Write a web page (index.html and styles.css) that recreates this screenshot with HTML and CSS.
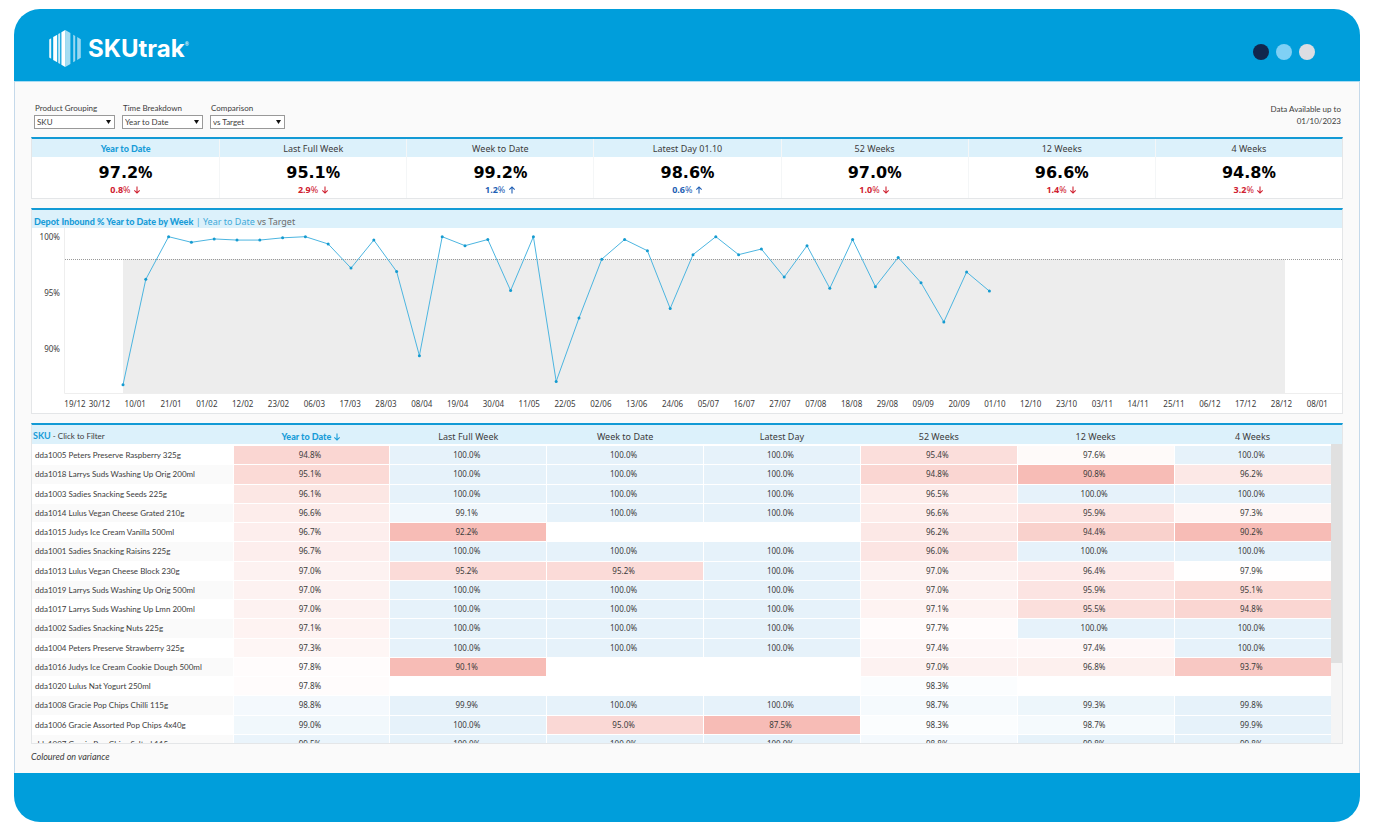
FILE: index.html
```html
<!DOCTYPE html>
<html lang="en">

<head>
    <meta charset="UTF-8">
    <meta name="viewport" content="width=device-width, initial-scale=1">
    <title>SKUtrak</title>
    <link rel="stylesheet" href="styles.css">
</head>

<body>
    <div class="window">
        <header class="top-bar">
            <div class="logo">
                <svg class="logo-mark" viewBox="0 0 32 37" aria-hidden="true">
                    <g fill="#fff">
                        <path d="M0.2 9.4L2.2 8.2V28.8L0.2 27.6Z" opacity=".9" />
                        <path d="M4.2 7L8.2 4.7V32.3L4.2 30Z" />
                        <path d="M9.2 4.1L11.2 2.9V34.1L9.2 32.9Z" opacity=".8" />
                        <path d="M12.4 2.2L16.2 0V37L12.4 34.8Z" />
                        <path d="M16.2 0L21.4 3.1V33.9L16.2 37Z" opacity=".65" />
                        <path d="M24.2 4.8L26.2 5.9V31.1L24.2 32.2Z" opacity=".6" />
                        <path d="M28.2 7.1L31.8 9.2V27.8L28.2 29.9Z" opacity=".6" />
                    </g>
                </svg>
                <span class="logo-text">SKUtrak</span><span class="logo-reg">®</span>
            </div>
            <div class="dots">
                <span class="dot dot-navy"></span>
                <span class="dot dot-sky"></span>
                <span class="dot dot-grey"></span>
            </div>
        </header>

        <main class="content">
            <div class="toolbar">
                <div class="filters">
                    <div class="filter">
                        <label for="grouping">Product Grouping</label>
                        <div class="select-box">
                            <select id="grouping">
                                <option>SKU</option>
                            </select>
                        </div>
                    </div>
                    <div class="filter">
                        <label for="breakdown">Time Breakdown</label>
                        <div class="select-box">
                            <select id="breakdown">
                                <option>Year to Date</option>
                            </select>
                        </div>
                    </div>
                    <div class="filter">
                        <label for="comparison">Comparison</label>
                        <div class="select-box select-short">
                            <select id="comparison">
                                <option>vs Target</option>
                            </select>
                        </div>
                    </div>
                </div>
                <p class="available">Data Available up to<br>01/10/2023</p>
            </div>

            <section class="panel kpis" id="kpis"></section>

            <section class="panel chart-panel">
                <h2 class="panel-title"><b>Depot Inbound % Year to Date by Week</b> | Year to Date <span>vs Target</span></h2>
                <svg class="chart" id="chart" viewBox="0 0 1310 185"></svg>
            </section>

            <section class="panel table-panel">
                <table class="sku-table">
                    <colgroup>
                        <col class="name-col">
                        <col span="7">
                    </colgroup>
                    <thead>
                        <tr>
                            <th class="name"><b>SKU</b> - Click to Filter</th>
                            <th class="active">Year to Date <svg class="arrow" viewBox="0 0 8 9"><path d="M4 0.5V8M1 5L4 8L7 5" /></svg></th>
                            <th>Last Full Week</th>
                            <th>Week to Date</th>
                            <th>Latest Day</th>
                            <th>52 Weeks</th>
                            <th>12 Weeks</th>
                            <th>4 Weeks</th>
                        </tr>
                    </thead>
                    <tbody id="rows"></tbody>
                </table>
                <div class="scroll-track">
                    <div class="scroll-thumb"></div>
                </div>
            </section>

            <p class="note">Coloured on variance</p>
        </main>

        <footer class="bottom-bar"></footer>
    </div>
    <script src="script.js"></script>
</body>

</html>
```

FILE: styles.css
```css
* {
    box-sizing: border-box;
    margin: 0;
    padding: 0;
}

body {
    padding: 9px 16px 7px 14px;
    background: #fff;
    color: #3c3c3c;
    font-family: "Noto Sans", "Open Sans", sans-serif;
    font-size: 8px;
    line-height: 12px;
}

.window {
    border-radius: 26px;
    overflow: hidden;
    background: #009edb;
}

/* header */

.top-bar {
    display: flex;
    justify-content: space-between;
    align-items: center;
    height: 72px;
    padding: 6px 45px 0 35px;
}

.logo {
    display: flex;
    align-items: center;
    color: #fff;
}

.logo-mark {
    width: 32px;
    height: 37px;
    margin-right: 7px;
}

.logo-text {
    padding-top: 2px;
    font-family: Inter, sans-serif;
    font-size: 24px;
    font-weight: 700;
    line-height: 32px;
}

.logo-reg {
    align-self: flex-start;
    padding-top: 10px;
    font-size: 5px;
    line-height: 8px;
}

.dots {
    display: flex;
    gap: 7px;
    padding-top: 8px;
}

.dot {
    width: 16px;
    height: 16px;
    border-radius: 50%;
}

.dot-navy {
    background: #11264d;
}

.dot-sky {
    background: #7fd0f5;
}

.dot-grey {
    background: #dcdde2;
}

/* content */

.content {
    padding: 20px 16px 0;
    border: 1px solid #c5d9ea;
    border-top-color: #a8dcf3;
    border-bottom: 0;
    background: #fafafa;
}

.toolbar {
    display: flex;
    justify-content: space-between;
    padding: 0 2px 0 3px;
    margin-bottom: 8px;
    font-family: Lato, sans-serif;
}

.filters {
    display: flex;
    gap: 7px;
}

.filter label {
    display: block;
    padding-left: 1px;
    margin-bottom: 1px;
}

.select-box {
    position: relative;
    width: 81px;
}

.select-short {
    width: 75px;
}

.select-box select {
    display: block;
    width: 100%;
    height: 14px;
    padding: 0 12px 0 2px;
    border: 1px solid #999;
    border-radius: 0;
    background: #fff;
    color: #3c3c3c;
    font: inherit;
    line-height: 12px;
    appearance: none;
}

.select-box::after {
    content: "";
    position: absolute;
    top: 5px;
    right: 4px;
    width: 5px;
    height: 4px;
    background: #111;
    clip-path: polygon(0 0, 100% 0, 50% 100%);
    pointer-events: none;
}

.available {
    padding-top: 1px;
    text-align: right;
}

.panel {
    margin-bottom: 9px;
    border: 1px solid #e4e6e8;
    border-top: 2px solid #129ad5;
    background: #fff;
}

/* kpi strip */

.kpis {
    display: grid;
    grid-template-columns: repeat(7, 1fr);
    text-align: center;
}

.kpi {
    height: 59px;
}

.kpi + .kpi {
    border-left: 1px solid #f4f6f7;
}

.kpi h3 {
    height: 18px;
    background: #dcf1fb;
    font-size: 9px;
    font-weight: 400;
    line-height: 19px;
}

.kpi.active h3,
.sku-table .active {
    color: #189cd8;
    font-family: Lato, sans-serif;
    font-weight: 900;
}

.kpi-value {
    padding-top: 5px;
    color: #000;
    font-family: "DejaVu Sans", sans-serif;
    font-size: 16px;
    font-weight: 700;
    line-height: 20px;
}

.kpi-value span {
    font-family: "Noto Sans", sans-serif;
}

.kpi-delta {
    font-size: 9px;
    font-weight: 700;
    line-height: 14px;
}

.kpi-delta span {
    font-weight: 400;
}

.arrow {
    width: 8px;
    height: 8px;
    vertical-align: -1px;
    fill: none;
    stroke: currentColor;
    stroke-width: 1.2;
}

.down {
    color: #cf2030;
}

.up {
    color: #1f5fb4;
}

.up .arrow {
    transform: rotate(180deg);
}

/* chart */

.panel-title {
    height: 18px;
    padding-left: 2px;
    background: #dcf1fb;
    color: #3fa9d9;
    font-size: 9px;
    font-weight: 400;
    line-height: 23px;
}

.panel-title b {
    color: #189cd8;
    font-family: Lato, sans-serif;
    font-weight: 900;
}

.panel-title span {
    color: #6b6b6b;
}

.chart {
    display: block;
    width: 100%;
}

.chart text {
    fill: #3c3c3c;
    font-size: 8px;
}

.chart .band {
    fill: #ededed;
}

.chart .axis {
    fill: none;
    stroke: #eee;
}

.chart .target {
    stroke: #999;
    stroke-dasharray: 1 1;
}

.chart .line {
    fill: none;
    stroke: #4cb5e0;
}

.chart .point {
    fill: #159bd0;
}

/* table */

.table-panel {
    display: grid;
    grid-template-columns: 1fr 11px;
    height: 321px;
    margin-bottom: 6px;
    overflow: hidden;
    background: linear-gradient(#dcf1fb 19px, #fff 19px);
}

.sku-table {
    width: 100%;
    height: 328px;
    border-collapse: collapse;
    table-layout: fixed;
}

.sku-table .name-col {
    width: 201px;
}

.sku-table th {
    height: 19px;
    padding-top: 2px;
    font-size: 9px;
    font-weight: 400;
    line-height: 17px;
}

.sku-table td {
    padding-right: 3px;
    border: solid #fff;
    border-width: 1px 0 0 1px;
    text-align: center;
    line-height: 16px;
}

.sku-table .name {
    padding-left: 3px;
    border-left: 0;
    font-family: Lato, sans-serif;
    text-align: left;
    white-space: nowrap;
}

.sku-table th.name {
    padding-left: 1px;
    font-size: 8px;
}

.sku-table th.name b {
    color: #189cd8;
    font-size: 9px;
}

.sku-table tbody tr:nth-child(even) .name {
    background: #fafafa;
}

.scroll-track {
    margin-top: 19px;
    background: #f5f5f5;
}

.scroll-thumb {
    height: 219px;
    background: #e0e0e0;
}

.note {
    padding-bottom: 9px;
    font-family: Lato, sans-serif;
    font-size: 9px;
    font-style: italic;
    line-height: 14px;
}

.bottom-bar {
    height: 49px;
}
```

FILE: script.js
```js
var kpis = [
    ['Year to Date', '97.2', '0.8', 'down'],
    ['Last Full Week', '95.1', '2.9', 'down'],
    ['Week to Date', '99.2', '1.2', 'up'],
    ['Latest Day 01.10', '98.6', '0.6', 'up'],
    ['52 Weeks', '97.0', '1.0', 'down'],
    ['12 Weeks', '96.6', '1.4', 'down'],
    ['4 Weeks', '94.8', '3.2', 'down']
];

var weeks = [86.8, 96.2, 100, 99.5, 99.8, 99.7, 99.7, 99.9, 100, 99.35, 97.2, 99.7, 96.9,
    89.4, 100, 99.2, 99.75, 95.2, 100, 87.1, 92.75, 98, 99.75, 98.75, 93.6, 98.4,
    100, 98.4, 98.9, 96.4, 99.2, 95.4, 99.75, 95.55, 98.15, 95.9, 92.4, 96.85, 95.15];

var dates = ['30/12', '10/01', '21/01', '01/02', '12/02', '23/02', '06/03', '17/03', '28/03', '08/04', '19/04',
    '30/04', '11/05', '22/05', '02/06', '13/06', '24/06', '05/07', '16/07', '27/07', '07/08', '18/08', '29/08',
    '09/09', '20/09', '01/10', '12/10', '23/10', '03/11', '14/11', '25/11', '06/12', '17/12', '28/12', '08/01'];

var skus = [
    ['dda1005 Peters Preserve Raspberry 325g', 94.8, 100, 100, 100, 95.4, 97.6, 100],
    ['dda1018 Larrys Suds Washing Up Orig 200ml', 95.1, 100, 100, 100, 94.8, 90.8, 96.2],
    ['dda1003 Sadies Snacking Seeds 225g', 96.1, 100, 100, 100, 96.5, 100, 100],
    ['dda1014 Lulus Vegan Cheese Grated 210g', 96.6, 99.1, 100, 100, 96.6, 95.9, 97.3],
    ['dda1015 Judys Ice Cream Vanilla 500ml', 96.7, 92.2, null, null, 96.2, 94.4, 90.2],
    ['dda1001 Sadies Snacking Raisins 225g', 96.7, 100, 100, 100, 96.0, 100, 100],
    ['dda1013 Lulus Vegan Cheese Block 230g', 97.0, 95.2, 95.2, 100, 97.0, 96.4, 97.9],
    ['dda1019 Larrys Suds Washing Up Orig 500ml', 97.0, 100, 100, 100, 97.0, 95.9, 95.1],
    ['dda1017 Larrys Suds Washing Up Lmn 200ml', 97.0, 100, 100, 100, 97.1, 95.5, 94.8],
    ['dda1002 Sadies Snacking Nuts 225g', 97.1, 100, 100, 100, 97.7, 100, 100],
    ['dda1004 Peters Preserve Strawberry 325g', 97.3, 100, 100, 100, 97.4, 97.4, 100],
    ['dda1016 Judys Ice Cream Cookie Dough 500ml', 97.8, 90.1, null, null, 97.0, 96.8, 93.7],
    ['dda1020 Lulus Nat Yogurt 250ml', 97.8, null, null, null, 98.3, null, null],
    ['dda1008 Gracie Pop Chips Chilli 115g', 98.8, 99.9, 100, 100, 98.7, 99.3, 99.8],
    ['dda1006 Gracie Assorted Pop Chips 4x40g', 99.0, 100, 95.0, 87.5, 98.3, 98.7, 99.9],
    ['dda1007 Gracie Pop Chips Salted 115g', 99.5, 100, 100, 100, 98.8, 99.8, 99.8]
];

var target = 98;

// white at target, red below it, blue above it
function shade(value) {
    if (value === null) return '#fff';
    var end = value < target ? [247, 188, 182] : [230, 242, 250];
    var t = value < target ? (target - value) / 5.2 : (value - target) / 1.8;
    t = Math.min(1, t);
    return 'rgb(' + end.map(function (c) {
        return Math.round(255 - (255 - c) * t);
    }).join(',') + ')';
}

var arrow = '<svg class="arrow" viewBox="0 0 8 9"><path d="M4 0.5V8M1 5L4 8L7 5"/></svg>';

document.getElementById('kpis').innerHTML = kpis.map(function (k, i) {
    return '<div class="kpi' + (i == 0 ? ' active' : '') + '"><h3>' + k[0] + '</h3>' +
        '<p class="kpi-value">' + k[1] + '<span>%</span></p>' +
        '<p class="kpi-delta ' + k[3] + '">' + k[2] + '<span>%</span> ' + arrow + '</p></div>';
}).join('');

document.getElementById('rows').innerHTML = skus.map(function (row) {
    return '<tr><td class="name">' + row[0] + '</td>' + row.slice(1).map(function (v) {
        return '<td style="background:' + shade(v) + '">' + (v === null ? '' : v.toFixed(1) + '%') + '</td>';
    }).join('') + '</tr>';
}).join('');

function yOf(value) {
    return 8.7 + (100 - value) * 11.22;
}

function xOf(week) {
    return 91 + week * 22.8;
}

function drawChart() {
    var bottom = 165;
    var points = weeks.map(function (v, i) {
        return [xOf(i), yOf(v)];
    });
    var out = '<rect class="band" x="91" y="' + yOf(target) + '" width="1162" height="' + (bottom - yOf(target)) + '"/>';
    out += '<path class="axis" d="M32.5 0V' + bottom + '.5H1310"/>';
    out += '<path class="target" d="M33 31.5H1310"/>';
    out += '<polyline class="line" points="' + points.join(' ') + '"/>';
    points.forEach(function (p) {
        out += '<circle class="point" cx="' + p[0] + '" cy="' + p[1] + '" r="1.5"/>';
    });
    [100, 95, 90].forEach(function (v) {
        out += '<text x="28" y="' + (yOf(v) + 3) + '" text-anchor="end">' + v + '%</text>';
    });
    out += '<text x="43" y="179" text-anchor="middle">19/12</text>';
    dates.forEach(function (d, i) {
        out += '<text x="' + (67.4 + i * 35.82) + '" y="179" text-anchor="middle">' + d + '</text>';
    });
    document.getElementById('chart').innerHTML = out;
}

drawChart();
```
